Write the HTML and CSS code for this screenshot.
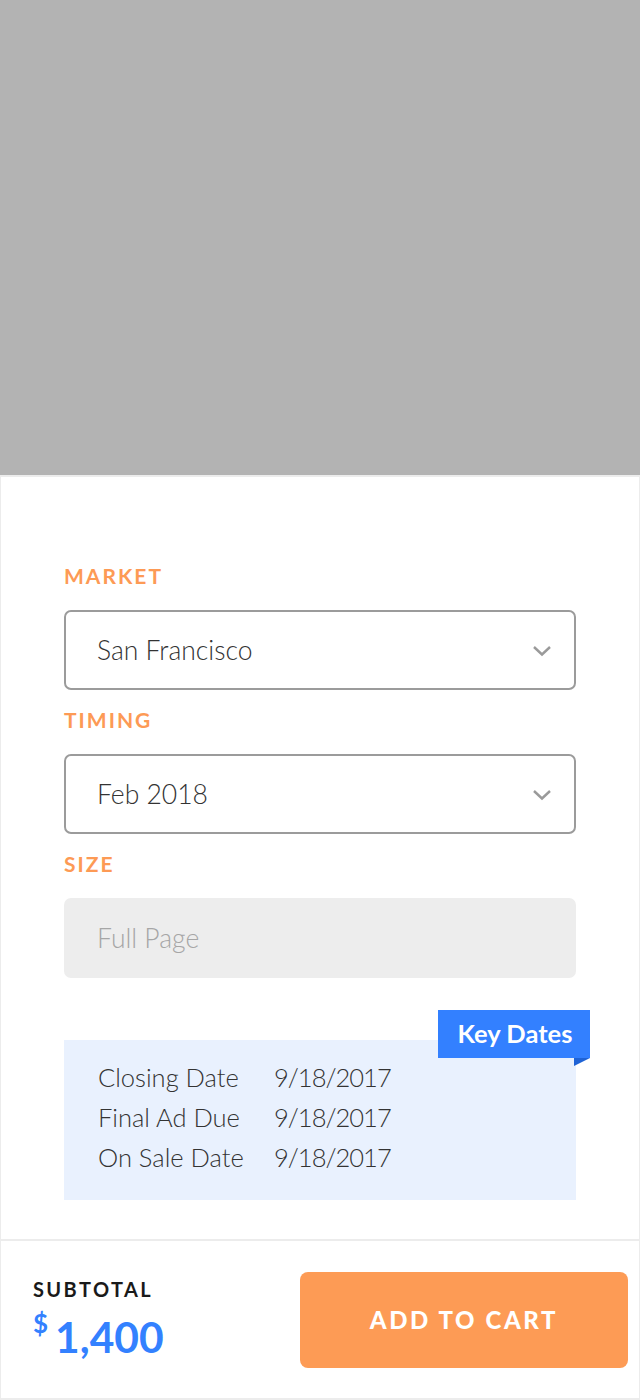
FILE: index.html
```html
<!DOCTYPE html>
<html>
<head>
<meta charset="utf-8">
<link rel="stylesheet" href="styles.css">
</head>
<body>
<div class="hero"></div>
<div class="card">
  <div class="field">
    <div class="label">MARKET</div>
    <div class="select">
      <span class="value">San Francisco</span>
      <svg class="chev" width="20" height="12" viewBox="0 0 20 12"><path d="M2 2 L10 9.5 L18 2" fill="none" stroke="#9a9a9a" stroke-width="2.4"/></svg>
    </div>
  </div>
  <div class="field">
    <div class="label">TIMING</div>
    <div class="select">
      <span class="value">Feb 2018</span>
      <svg class="chev" width="20" height="12" viewBox="0 0 20 12"><path d="M2 2 L10 9.5 L18 2" fill="none" stroke="#9a9a9a" stroke-width="2.4"/></svg>
    </div>
  </div>
  <div class="field">
    <div class="label">SIZE</div>
    <div class="select disabled">
      <span class="value">Full Page</span>
    </div>
  </div>
  <div class="dates">
    <div class="tag">Key Dates</div>
    <div class="fold"></div>
    <div class="row"><span class="k">Closing Date</span><span class="v">9/18/2017</span></div>
    <div class="row"><span class="k">Final Ad Due</span><span class="v">9/18/2017</span></div>
    <div class="row"><span class="k">On Sale Date</span><span class="v">9/18/2017</span></div>
  </div>
</div>
<div class="footer">
  <div class="subtotal">
    <div class="sub-label">SUBTOTAL</div>
    <div class="price"><span class="cur">$</span><span class="amt">1,400</span></div>
  </div>
  <button class="cart">ADD TO CART</button>
</div>
</body>
</html>
```
FILE: styles.css
```css
* { box-sizing: border-box; }
html, body { margin: 0; padding: 0; }
body {
  width: 640px;
  height: 1400px;
  font-family: "Lato", "Open Sans", sans-serif;
  background: #fff;
  color: #333;
}
.hero {
  height: 475px;
  background: #b3b3b3;
}
.card {
  border-top: 2px solid #ececec;
  border-left: 1px solid #ececec;
  border-right: 1px solid #ececec;
  padding: 87px 63px 39px 63px;
}
.field + .field .label { margin-top: 18px; }
.label {
  font-size: 21px;
  line-height: 24px;
  height: 24px;
  font-weight: 700;
  letter-spacing: 2px;
  color: #fd9a55;
  margin-bottom: 22px;
}
.select {
  height: 80px;
  border: 2px solid #9b9b9b;
  border-radius: 7px;
  display: flex;
  align-items: center;
  justify-content: space-between;
  padding: 0 22px 0 31px;
}
.value {
  font-size: 26.5px;
  font-weight: 300;
  color: #333;
}
.chev { margin-top: 2px; }
.select.disabled {
  border: none;
  background: #ededed;
  padding-left: 33px;
}
.select.disabled .value { color: #a6a6a6; }
.dates {
  position: relative;
  margin-top: 62px;
  height: 160px;
  background: #e9f1fe;
  padding: 17px 0 0 34px;
}
.tag {
  position: absolute;
  top: -30px;
  right: -14px;
  width: 152px;
  height: 48px;
  background: #3380ff;
  color: #fff;
  font-size: 25.5px;
  font-weight: 700;
  display: flex;
  align-items: center;
  justify-content: center;
  padding: 0 0 2px 2px;
}
.fold {
  position: absolute;
  top: 18px;
  right: -14px;
  width: 0;
  height: 0;
  border-top: 8px solid #1f63d6;
  border-right: 16px solid transparent;
}
.row {
  display: flex;
  height: 40px;
  align-items: center;
  font-size: 25.5px;
  font-weight: 300;
  color: #333;
}
.row .k { width: 176px; }
.row .v { letter-spacing: -1px; }
.footer {
  border-top: 2px solid #ececec;
  border-left: 1px solid #ececec;
  border-right: 1px solid #ececec;
  border-bottom: 2px solid #ececec;
  height: 161px;
  display: flex;
  align-items: center;
  justify-content: space-between;
  padding: 0 11px 0 32px;
}
.subtotal {
  align-self: flex-start;
  margin-top: 36px;
}
.sub-label {
  font-size: 20px;
  font-weight: 700;
  letter-spacing: 2.4px;
  color: #1a1a1a;
  line-height: 24px;
}
.price {
  display: flex;
  align-items: flex-start;
  color: #3381ff;
  font-weight: 700;
  margin-top: 13px;
}
.cur { font-size: 26px; line-height: 30px; margin-top: -6px; margin-right: 7px; }
.amt { font-size: 42.5px; line-height: 46px; }
.cart {
  width: 328px;
  height: 96px;
  border: none;
  border-radius: 8px;
  background: #fd9b55;
  color: #fff;
  font-family: "Lato", "Open Sans", sans-serif;
  font-size: 24px;
  font-weight: 900;
  letter-spacing: 2.6px;
  padding: 0;
}
```
